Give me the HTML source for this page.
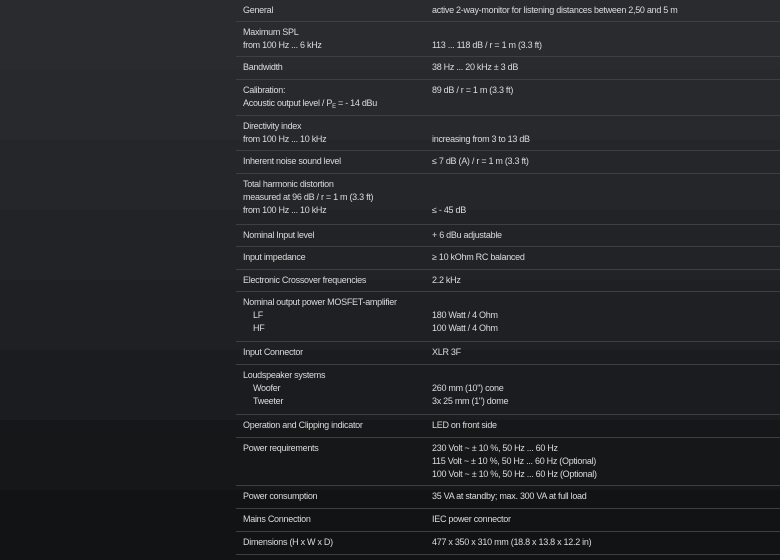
<!DOCTYPE html>
<html style="background:#1e1f22"><head><meta charset="utf-8"><style>
html,body{margin:0;padding:0}
body{width:780px;height:560px;overflow:hidden;background:#1e1f22;font-family:"Liberation Sans",sans-serif;font-size:9px;letter-spacing:-0.28px;color:#dcdcdc;position:relative}
.b{position:absolute;left:0;width:780px}
.r{position:absolute;left:236px;right:0;border-bottom:1px solid #3e3f43;box-sizing:border-box}
.c{position:absolute;top:4px;line-height:13px;white-space:nowrap}
.l{left:7px}.v{left:196px}
.i{padding-left:10px}
sub{font-size:6px;vertical-align:-2px;line-height:0}
</style></head><body>
<div class="b" style="top:0;height:70px;background:#2a2b2f"></div>
<div class="b" style="top:70px;height:70px;background:#28292d"></div>
<div class="b" style="top:140px;height:70px;background:#25262a"></div>
<div class="b" style="top:210px;height:70px;background:#222326"></div>
<div class="b" style="top:280px;height:70px;background:#1f2023"></div>
<div class="b" style="top:350px;height:70px;background:#1b1c1f"></div>
<div class="b" style="top:420px;height:70px;background:#161719"></div>
<div class="b" style="top:490px;height:70px;background:#121315"></div>
<div class="r" style="top:0;height:22px"><div class="c l">General</div><div class="c v">active 2-way-monitor for listening distances between 2,50 and 5 m</div></div>
<div class="r" style="top:22px;height:35px"><div class="c l">Maximum SPL<br>from 100 Hz ... 6 kHz</div><div class="c v"><br>113 ... 118 dB / r = 1 m (3.3 ft)</div></div>
<div class="r" style="top:57px;height:23px"><div class="c l">Bandwidth</div><div class="c v">38 Hz ... 20 kHz ± 3 dB</div></div>
<div class="r" style="top:80px;height:36px"><div class="c l">Calibration:<br>Acoustic output level / P<sub>E</sub> = - 14 dBu</div><div class="c v">89 dB / r = 1 m (3.3 ft)</div></div>
<div class="r" style="top:116px;height:35px"><div class="c l">Directivity index<br>from 100 Hz ... 10 kHz</div><div class="c v"><br>increasing from 3 to 13 dB</div></div>
<div class="r" style="top:151px;height:23px"><div class="c l">Inherent noise sound level</div><div class="c v">≤ 7 dB (A) / r = 1 m (3.3 ft)</div></div>
<div class="r" style="top:174px;height:51px"><div class="c l">Total harmonic distortion<br>measured at 96 dB / r = 1 m (3.3 ft)<br>from 100 Hz ... 10 kHz</div><div class="c v"><br><br>≤ - 45 dB</div></div>
<div class="r" style="top:225px;height:22px"><div class="c l">Nominal Input level</div><div class="c v">+ 6 dBu adjustable</div></div>
<div class="r" style="top:247px;height:23px"><div class="c l">Input impedance</div><div class="c v">≥ 10 kOhm RC balanced</div></div>
<div class="r" style="top:270px;height:22px"><div class="c l">Electronic Crossover frequencies</div><div class="c v">2.2 kHz</div></div>
<div class="r" style="top:292px;height:50px"><div class="c l">Nominal output power MOSFET-amplifier<br><span class="i">LF</span><br><span class="i">HF</span></div><div class="c v"><br>180 Watt / 4 Ohm<br>100 Watt / 4 Ohm</div></div>
<div class="r" style="top:342px;height:23px"><div class="c l">Input Connector</div><div class="c v">XLR 3F</div></div>
<div class="r" style="top:365px;height:50px"><div class="c l">Loudspeaker systems<br><span class="i">Woofer</span><br><span class="i">Tweeter</span></div><div class="c v"><br>260 mm (10") cone<br>3x 25 mm (1") dome</div></div>
<div class="r" style="top:415px;height:23px"><div class="c l">Operation and Clipping indicator</div><div class="c v">LED on front side</div></div>
<div class="r" style="top:438px;height:48px"><div class="c l">Power requirements</div><div class="c v">230 Volt ~ ± 10 %, 50 Hz ... 60 Hz<br>115 Volt ~ ± 10 %, 50 Hz ... 60 Hz (Optional)<br>100 Volt ~ ± 10 %, 50 Hz ... 60 Hz (Optional)</div></div>
<div class="r" style="top:486px;height:23px"><div class="c l">Power consumption</div><div class="c v">35 VA at standby; max. 300 VA at full load</div></div>
<div class="r" style="top:509px;height:23px"><div class="c l">Mains Connection</div><div class="c v">IEC power connector</div></div>
<div class="r" style="top:532px;height:23px"><div class="c l">Dimensions (H x W x D)</div><div class="c v">477 x 350 x 310 mm (18.8 x 13.8 x 12.2 in)</div></div>
</body></html>
